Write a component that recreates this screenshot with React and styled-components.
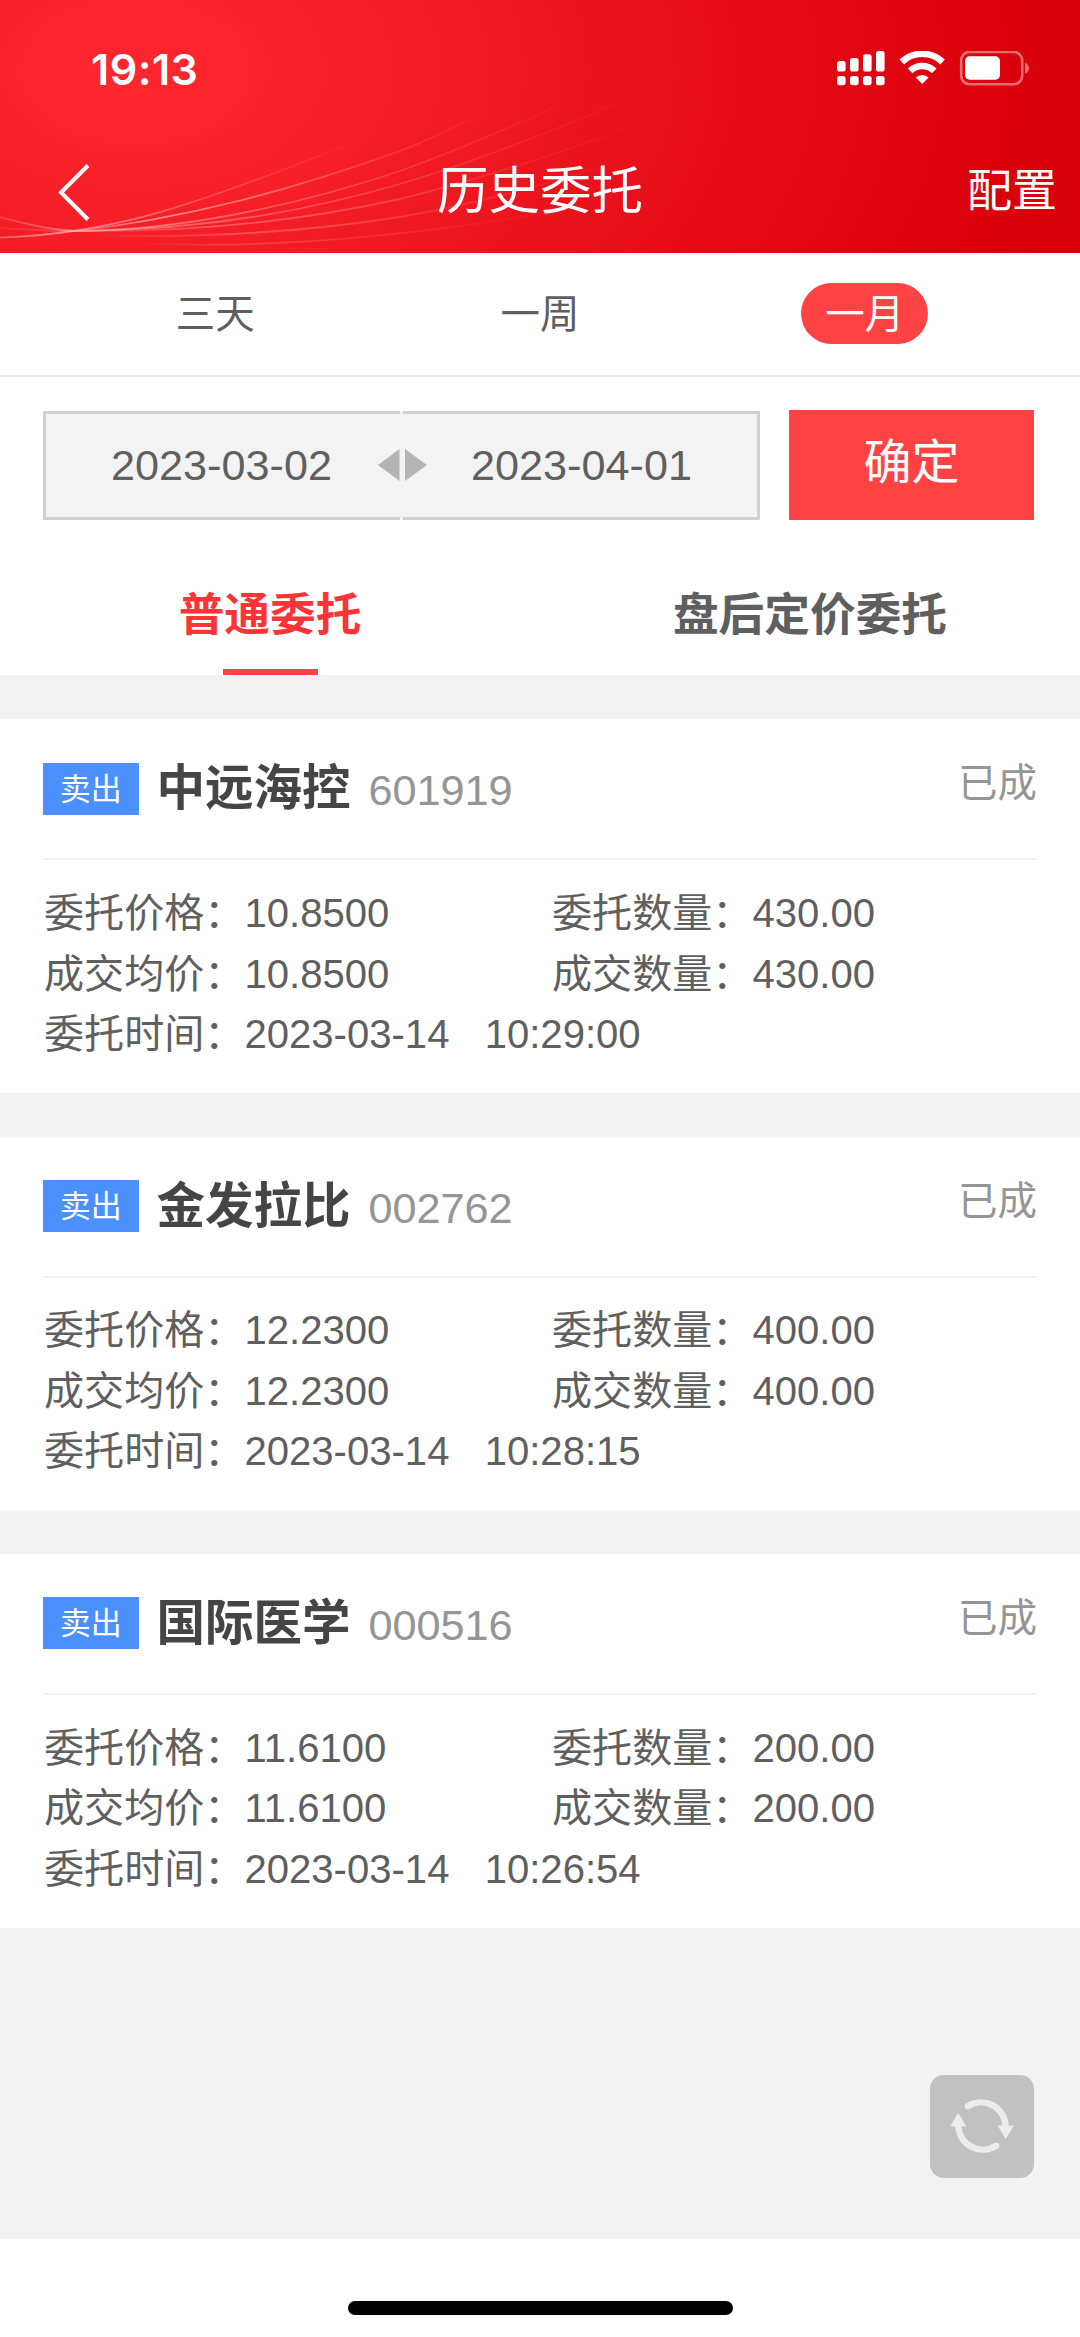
import React from "react";
import styled, { createGlobalStyle } from "styled-components";

const GlobalStyle = createGlobalStyle`
  *, *::before, *::after { box-sizing: border-box; }
  body {
    margin: 0;
    background: #ffffff;
    font-family: "Liberation Sans", "Noto Sans CJK SC", sans-serif;
    color: #5f5f5f;
  }
  button {
    border: 0;
    padding: 0;
    margin: 0;
    background: none;
    font: inherit;
    color: inherit;
  }
`;

const Screen = styled.div`
  display: flex;
  flex-direction: column;
  width: 1080px;
  height: 2337px;
  background: #ffffff;
  overflow: hidden;
`;

const Header = styled.header`
  position: relative;
  display: flex;
  flex-direction: column;
  flex: none;
  height: 252.7px;
  background: radial-gradient(
    ellipse 1010px 640px at 135px 70px,
    #fe2730 0%,
    #f61e27 24%,
    #ec151e 43%,
    #e30a14 64%,
    #db020d 84%,
    #d6000a 100%
  );
  color: #ffffff;
`;

const Waves = styled.svg`
  position: absolute;
  inset: 0;
`;

const StatusBar = styled.div`
  position: relative;
  display: flex;
  align-items: center;
  justify-content: space-between;
  height: 137px;
  padding: 0 50px 0 91px;
`;

const Clock = styled.span`
  font-family: Inter, sans-serif;
  font-size: 43px;
  font-weight: 600;
  line-height: 50px;
  letter-spacing: 0.5px;
`;

const NavBar = styled.div`
  position: relative;
  display: grid;
  grid-template-columns: 1fr auto 1fr;
  align-items: center;
  height: 108px;
  padding: 0 23px;
`;

const BackButton = styled.button`
  display: flex;
  justify-self: start;
  margin-left: 34px;
`;

const Title = styled.h1`
  margin: 0;
  font-size: 51.5px;
  font-weight: 400;
  line-height: 60px;
`;

const ConfigButton = styled.button`
  justify-self: end;
  padding-top: 2px;
  font-size: 45px;
  line-height: 60px;
`;

const RangeTabs = styled.div`
  display: grid;
  grid-template-columns: repeat(3, 1fr);
  flex: none;
  align-items: center;
  height: 124px;
  padding: 0 53px;
  border-bottom: 2px solid #ececec;
`;

const RangeTab = styled.button`
  justify-self: center;
  height: 61px;
  padding: 0 24px;
  border-radius: 31px;
  background: ${(p) => (p.$active ? "#ff4244" : "transparent")};
  color: ${(p) => (p.$active ? "#ffffff" : "#5f5f5f")};
  font-size: 39.5px;
  line-height: 63px;
`;

const FilterRow = styled.div`
  display: flex;
  flex: none;
  justify-content: space-between;
  height: 143px;
  padding: 34px 46px 0 43px;
`;

const DateRange = styled.div`
  position: relative;
  display: grid;
  grid-template-columns: 1fr 1fr;
  gap: 3px;
  width: 717px;
  height: 109px;
  background: #f3f3f3;
`;

const DateField = styled.div`
  display: flex;
  align-items: center;
  justify-content: center;
  border: 3px solid #d0d0d0;
  border-${(p) => p.$open}-width: 0;
  padding-${(p) => p.$open}: 3px;
  font-size: 43.2px;
`;

const RangeArrows = styled.svg`
  position: absolute;
  left: 335px;
  top: 38px;
`;

const ConfirmButton = styled.button`
  width: 245px;
  height: 110px;
  margin-top: -1px;
  padding-bottom: 4px;
  background: #ff4244;
  color: #ffffff;
  font-size: 48px;
  line-height: 104px;
`;

const TypeTabs = styled.div`
  display: grid;
  grid-template-columns: 1fr 1fr;
  flex: none;
  height: 155px;
`;

const TypeTab = styled.button`
  display: flex;
  flex-direction: column;
  align-items: center;
  justify-content: space-between;
  padding-top: 66px;
  color: ${(p) => (p.$active ? "#f93538" : "#5f5f5f")};
  font-size: 45.7px;
  font-weight: 700;
  line-height: 60px;

  &::after {
    content: "";
    width: 95px;
    height: 6px;
    background: ${(p) => (p.$active ? "#ff4244" : "transparent")};
  }
`;

const OrderList = styled.main`
  display: flex;
  flex-direction: column;
  flex: none;
  gap: 43.2px;
  height: 1564px;
  padding-top: 44.8px;
  background: #f2f2f2;
`;

const Card = styled.article`
  flex: none;
  height: 374px;
  padding: 0 43px;
  background: #ffffff;
`;

const CardHead = styled.div`
  display: flex;
  align-items: center;
  height: 141px;
  border-bottom: 2px solid #f1f1f1;
`;

const SideBadge = styled.span`
  width: 95.5px;
  height: 52px;
  background: #4a90ff;
  color: #ffffff;
  font-size: 31px;
  line-height: 54px;
  text-align: center;
`;

const StockName = styled.h2`
  margin: 0 0 0 18px;
  color: #454545;
  font-size: 48.5px;
  font-weight: 700;
  line-height: 61px;
`;

const StockCode = styled.span`
  margin: 3px 0 0 18px;
  color: #959595;
  font-size: 43.2px;
  line-height: 60px;
`;

const Status = styled.span`
  margin: 0 0 11px auto;
  color: #959595;
  font-size: 39.5px;
  line-height: 50px;
`;

const Fields = styled.dl`
  display: grid;
  grid-template-columns: 508px 1fr;
  margin: 0;
  padding: 22.8px 0 0 1px;
`;

const Field = styled.div`
  display: flex;
  grid-column: ${(p) => (p.$wide ? "1 / -1" : "auto")};
  font-size: 40.1px;
  line-height: 60.5px;
  word-spacing: 0.6px;
  white-space: pre;
`;

const Label = styled.dt`
  margin: 0;
`;

const Value = styled.dd`
  margin: 0;
`;

const RefreshButton = styled.button`
  display: grid;
  place-items: center;
  flex: none;
  align-self: flex-end;
  width: 104px;
  height: 103.5px;
  margin: auto 46px 60.5px 0;
  border-radius: 14px;
  background: #c1c1c1;
`;

const HomeArea = styled.footer`
  display: flex;
  flex: 1;
  justify-content: center;
  padding-top: 62px;
`;

const HomeBar = styled.div`
  width: 385px;
  height: 14px;
  border-radius: 7px;
  background: #000000;
`;

const WAVES = [
  { d: "M0 237.5 C110 234 190 208 367 137", start: -60, end: 370, o: 0.62 },
  { d: "M60 233 C190 219 300 187 400 151 C440 136 470 119 494 107", start: 40, end: 495, o: 0.68 },
  { d: "M0 217 C30 225 55 231 83 231 C200 229 320 198 400 171 C470 146 530 119 590 91", start: -60, end: 590, o: 0.55 },
  { d: "M0 228 C30 230 55 231.5 83 231 C220 229 320 207 400 184 C500 154 590 116 664 83", start: -30, end: 664, o: 0.42 },
  { d: "M70 231 C200 233 310 219 400 199 C500 174 600 140 673 109", start: 60, end: 673, o: 0.36 },
  { d: "M90 235 C210 239 310 231 400 217 C510 198 600 168 678 140", start: 90, end: 678, o: 0.3 },
  { d: "M130 243 C250 249 400 241 600 203", start: 130, end: 600, o: 0.2 },
];

function HeaderWaves() {
  return (
    <Waves width="1080" height="253" viewBox="0 0 1080 253" fill="none">
      <defs>
        {WAVES.map((w, i) => (
          <linearGradient key={i} id={`wave${i}`} gradientUnits="userSpaceOnUse" x1={w.start} x2={w.end} y1="0" y2="0">
            <stop offset="0" stopColor="#ffc9c9" stopOpacity="0" />
            <stop offset="0.25" stopColor="#ffc9c9" stopOpacity={w.o} />
            <stop offset="0.5" stopColor="#ffc9c9" stopOpacity={w.o * 0.65} />
            <stop offset="0.75" stopColor="#ffc9c9" stopOpacity={w.o * 0.25} />
            <stop offset="1" stopColor="#ffc9c9" stopOpacity="0" />
          </linearGradient>
        ))}
      </defs>
      {WAVES.map((w, i) => (
        <path key={i} d={w.d} stroke={`url(#wave${i})`} strokeWidth="1.8" />
      ))}
    </Waves>
  );
}

function StatusIcons() {
  const bars = [
    { x: 0, y: 10, h: 10.5 },
    { x: 13, y: 7, h: 13.5 },
    { x: 26, y: 3.3, h: 17.2 },
    { x: 39, y: 0, h: 20.5 },
  ];
  return (
    <svg width="193" height="36" viewBox="0 0 193 36" fill="#ffffff">
      {bars.map((b) => (
        <g key={b.x}>
          <rect x={b.x} y={b.y} width="8.6" height={b.h} rx="2.6" />
          <rect x={b.x} y="25" width="8.6" height="9.2" rx="2.6" />
        </g>
      ))}
      <g fill="none" stroke="#ffffff" strokeWidth="6.6">
        <path d="M64.8 11 A29.5 29.5 0 0 1 105.6 11" />
        <path d="M73.1 19.8 A17.6 17.6 0 0 1 97.3 19.8" />
      </g>
      <path d="M85.2 33 L78.8 26.6 A9.4 9.4 0 0 1 91.6 26.6 Z" />
      <rect x="124.2" y="0.9" width="61" height="32.4" rx="8.6" fill="none" stroke="#ffffff" strokeOpacity="0.42" strokeWidth="2.6" />
      <rect x="128" y="5.3" width="35" height="23.4" rx="4.6" />
      <path d="M188 11.8 C193.2 13.8 193.2 20.8 188 22.8 Z" fillOpacity="0.45" />
    </svg>
  );
}

function RefreshIcon() {
  return (
    <svg width="66" height="58" viewBox="0 0 66 58" fill="none">
      <g stroke="#ececec" strokeWidth="6.4" strokeLinecap="round">
        <path d="M18.8 9.2 A24.6 24.6 0 0 1 56.6 29" />
        <path d="M47.2 48.8 A24.6 24.6 0 0 1 9.4 29" />
      </g>
      <path d="M48.5 28.6 H65 L56.8 42 Z" fill="#ececec" />
      <path d="M1 29.4 H17.5 L9.2 16 Z" fill="#ececec" />
    </svg>
  );
}

const ORDERS = [
  { name: "中远海控", code: "601919", price: "10.8500", avg: "10.8500", qty: "430.00", filled: "430.00", time: "2023-03-14   10:29:00" },
  { name: "金发拉比", code: "002762", price: "12.2300", avg: "12.2300", qty: "400.00", filled: "400.00", time: "2023-03-14   10:28:15" },
  { name: "国际医学", code: "000516", price: "11.6100", avg: "11.6100", qty: "200.00", filled: "200.00", time: "2023-03-14   10:26:54" },
];

function OrderField({ label, value, wide }) {
  return (
    <Field $wide={wide}>
      <Label>{label}：</Label>
      <Value>{value}</Value>
    </Field>
  );
}

function OrderCard({ order }) {
  return (
    <Card>
      <CardHead>
        <SideBadge>卖出</SideBadge>
        <StockName>{order.name}</StockName>
        <StockCode>{order.code}</StockCode>
        <Status>已成</Status>
      </CardHead>
      <Fields>
        <OrderField label="委托价格" value={order.price} />
        <OrderField label="委托数量" value={order.qty} />
        <OrderField label="成交均价" value={order.avg} />
        <OrderField label="成交数量" value={order.filled} />
        <OrderField label="委托时间" value={order.time} wide />
      </Fields>
    </Card>
  );
}

export default function App() {
  return (
    <>
      <GlobalStyle />
      <Screen lang="zh-CN">
        <Header>
          <HeaderWaves />
          <StatusBar>
            <Clock>19:13</Clock>
            <StatusIcons />
          </StatusBar>
          <NavBar>
            <BackButton aria-label="返回">
              <svg width="34" height="60" viewBox="0 0 34 60" fill="none" stroke="#ffffff" strokeWidth="4">
                <path d="M31 4.5 L4 31.5 L31 58.5" />
              </svg>
            </BackButton>
            <Title>历史委托</Title>
            <ConfigButton>配置</ConfigButton>
          </NavBar>
        </Header>

        <RangeTabs>
          <RangeTab>三天</RangeTab>
          <RangeTab>一周</RangeTab>
          <RangeTab $active>一月</RangeTab>
        </RangeTabs>

        <FilterRow>
          <DateRange>
            <DateField $open="right">2023-03-02</DateField>
            <DateField $open="left">2023-04-01</DateField>
            <RangeArrows width="49" height="32" viewBox="0 0 49 32" fill="#b4b4b4">
              <path d="M0 16 L21.5 0 V32 Z" />
              <path d="M49 16 L27 0 V32 Z" />
            </RangeArrows>
          </DateRange>
          <ConfirmButton>确定</ConfirmButton>
        </FilterRow>

        <TypeTabs>
          <TypeTab $active>普通委托</TypeTab>
          <TypeTab>盘后定价委托</TypeTab>
        </TypeTabs>

        <OrderList>
          {ORDERS.map((order) => (
            <OrderCard key={order.code} order={order} />
          ))}
          <RefreshButton aria-label="刷新">
            <RefreshIcon />
          </RefreshButton>
        </OrderList>

        <HomeArea>
          <HomeBar />
        </HomeArea>
      </Screen>
    </>
  );
}
